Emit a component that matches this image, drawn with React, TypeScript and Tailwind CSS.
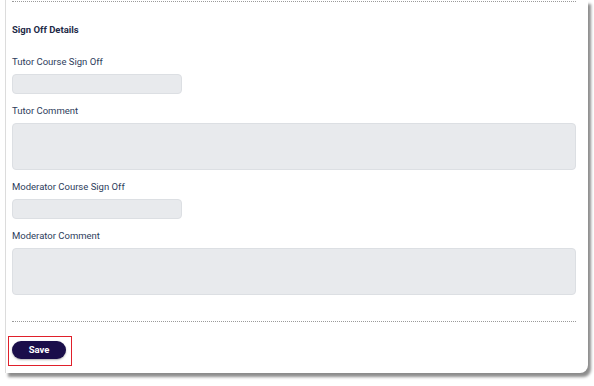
const fields = [
  { label: "Tutor Course Sign Off", kind: "input" },
  { label: "Tutor Comment", kind: "textarea" },
  { label: "Moderator Course Sign Off", kind: "input" },
  { label: "Moderator Comment", kind: "textarea" },
];

export default function App() {
  return (
    <div className="w-[594px] h-[386px] overflow-hidden bg-white font-['Roboto',sans-serif]">
      <div className="ml-[5px] flex h-[373px] w-[583px] flex-col rounded-br-[8px] border-l border-[#dcdcdc] bg-white pl-[6px] pr-[12px] shadow-[3px_4px_3px_rgba(0,0,0,0.45)]">
        <div className="mt-px border-t border-dotted border-[#9a9a9a]" />
        <h3 className="mt-[22px] text-[9.5px] font-bold leading-[12px] text-[#1e2a47]">
          Sign Off Details
        </h3>
        <div className="mt-[9px] flex flex-col">
          {fields.map((f) => (
            <div key={f.label} className="mt-[11px] flex flex-col">
              <label className="text-[9.5px] leading-[12px] text-[#2e3d5c]">{f.label}</label>
              {f.kind === "input" ? (
                <div className="mt-[6px] h-[20px] w-[170px] rounded-[4px] border border-[#dcdfe3] bg-[#e8eaed]" />
              ) : (
                <div className="mt-[6px] h-[47px] w-full rounded-[4px] border border-[#dcdfe3] bg-[#e8eaed]" />
              )}
            </div>
          ))}
        </div>
        <div className="mt-[26px] border-t border-dotted border-[#9a9a9a]" />
        <div className="ml-[-4px] mt-[14px] w-[64px] border-[1.5px] border-[#e0202b] pb-[6px] pl-[3px] pr-[5px] pt-[4px]">
          <button className="flex h-[18px] w-[54px] items-center justify-center rounded-full bg-[#1a0e4a] text-[9.5px] font-bold text-white shadow-[0_1px_2px_rgba(0,0,0,0.3)]">
            Save
          </button>
        </div>
      </div>
    </div>
  );
}
